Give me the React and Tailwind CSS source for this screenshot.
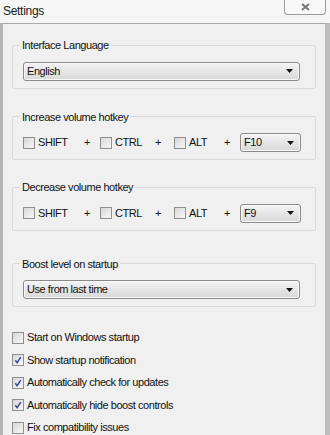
import React from 'react';

const font = { fontFamily: '"Liberation Sans", Arial, sans-serif' };

const Arrow = () => (
  <svg width="7" height="4" viewBox="0 0 7 4" className="shrink-0">
    <path d="M0 0h7L3.5 4z" fill="#111" />
  </svg>
);

const Select = ({ value, className = '' }) => (
  <div
    className={`flex items-center justify-between h-[19px] pl-[3px] pr-[6px] border border-[#8a8a8a] rounded-[3px] bg-gradient-to-b from-[#f4f4f4] to-[#d8d8d8] text-[11px] tracking-[-0.45px] text-[#111] shadow-[inset_0_0_0_1px_#fafafa] ${className}`}
  >
    <span>{value}</span>
    <Arrow />
  </div>
);

const Box = ({ checked }) => (
  <span className="w-[12px] h-[12px] border border-[#8f8f8f] bg-gradient-to-br from-[#d8d8d8] to-[#f8f8f8] flex items-center justify-center shrink-0">
    {checked && (
      <svg width="8" height="8" viewBox="0 0 8 8">
        <path d="M1.3 4.2L3.1 6.6L6.8 1.2" stroke="#3b4a9a" strokeWidth="1.5" fill="none" />
      </svg>
    )}
  </span>
);

const Group = ({ title, children, className = '' }) => (
  <fieldset className={`border border-[#dadada] rounded-[2px] mx-[9px] px-[10px] pb-[7px] pt-[8px] ${className}`}>
    <legend className="px-[2px] -ml-[3px] text-[11px] tracking-[-0.45px] text-[#111]">{title}</legend>
    {children}
  </fieldset>
);

const Hotkey = ({ keyName }) => (
  <div className="flex items-center text-[11px] tracking-[-0.45px] text-[#111]">
    <Box />
    <span className="ml-[3px] w-[46px]">SHIFT</span>
    <span className="w-[16px]">+</span>
    <Box />
    <span className="ml-[3px] w-[40px]">CTRL</span>
    <span className="w-[19px]">+</span>
    <Box />
    <span className="ml-[3px] w-[35px]">ALT</span>
    <span className="w-[16px]">+</span>
    <Select value={keyName} className="w-[61px]" />
  </div>
);

const options = [
  ['Start on Windows startup', false],
  ['Show startup notification', true],
  ['Automatically check for updates', true],
  ['Automatically hide boost controls', true],
  ['Fix compatibility issues', false],
];

export default function App() {
  return (
    <div style={font} className="w-[330px] h-[435px] bg-[#f6f6f6] flex flex-col overflow-hidden relative">
      <div className="h-[23px] shrink-0 pl-[3px] pt-[2px] text-[12px] tracking-[-0.3px] text-[#1a1a1a]">Settings</div>
      <div className="absolute top-0 right-[4px] w-[42px] h-[15px] border border-t-0 border-[#9a9a9a] rounded-b-[4px] bg-[#f8f8f8] flex items-center justify-center">
        <svg width="9" height="8" viewBox="0 0 9 8">
          <path d="M1 1L8 7M8 1L1 7" stroke="#777" strokeWidth="2" />
        </svg>
      </div>
      <div className="flex-1 bg-[#f0f0f0] border-t border-[#a8a8a8] border-l-[3px] border-l-[#b5b5b5] border-r-[5px] border-r-[#bdbdbd] pt-[13px]">
        <Group title="Interface Language">
          <Select value="English" className="w-[277px]" />
        </Group>
        <Group title="Increase volume hotkey" className="mt-[20px]">
          <Hotkey keyName="F10" />
        </Group>
        <Group title="Decrease volume hotkey" className="mt-[19px]">
          <Hotkey keyName="F9" />
        </Group>
        <Group title="Boost level on startup" className="mt-[25px]">
          <Select value="Use from last time" className="w-[277px]" />
        </Group>
        <div className="flex flex-col gap-[9.5px] pl-[9px] pt-[24px]">
          {options.map(([label, checked]) => (
            <div key={label} className="flex items-center h-[13px] text-[11px] tracking-[-0.45px] text-[#111]">
              <Box checked={checked} />
              <span className="ml-[3px]">{label}</span>
            </div>
          ))}
        </div>
      </div>
    </div>
  );
}
